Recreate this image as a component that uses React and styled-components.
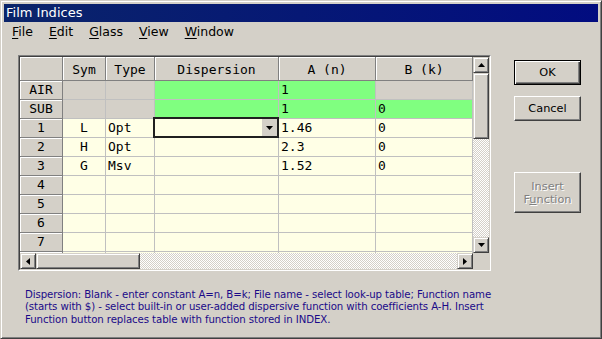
import React from 'react';
import styled, { createGlobalStyle } from 'styled-components';

const GlobalStyle = createGlobalStyle`
  html, body { margin: 0; padding: 0; background: #d4d0c8; }
  body { width: 602px; height: 339px; overflow: hidden; }
`;

const Window = styled.div`
  box-sizing: border-box;
  width: 602px;
  height: 339px;
  background: #d4d0c8;
  border: 1px solid;
  border-color: #d4d0c8 #404040 #404040 #d4d0c8;
  box-shadow: inset 1px 1px #fff, inset -1px -1px #808080;
  padding: 3px;
  display: flex;
  flex-direction: column;
  font-family: "DejaVu Sans", sans-serif;
`;

const TitleBar = styled.div`
  height: 18px;
  line-height: 18px;
  padding-left: 2px;
  color: #fff;
  font-size: 13px;
  background: linear-gradient(90deg, #0a246a, #020c80);
  white-space: nowrap;
`;

const MenuBar = styled.div`
  display: flex;
  height: 19px;
  align-items: center;
`;

const MenuItem = styled.div`
  padding: 0 8px;
  font-size: 12.5px;
  line-height: 19px;
  color: #000;
  u { text-decoration-thickness: 1px; text-underline-offset: 2px; }
`;

const Body = styled.div`
  display: flex;
  flex-direction: column;
  padding: 14px 0 0 14px;
`;

const MainRow = styled.div`
  display: flex;
  align-items: flex-start;
`;

const SunkenOuter = styled.div`
  box-sizing: border-box;
  width: 473px;
  height: 216px;
  border: 1px solid;
  border-color: #808080 #fff #fff #808080;
`;

const SunkenInner = styled.div`
  box-sizing: border-box;
  width: 100%;
  height: 100%;
  border: 1px solid;
  border-color: #404040 #d4d0c8 #d4d0c8 #404040;
  display: grid;
  grid-template-columns: 453px 16px;
  grid-template-rows: 196px 16px;
`;

const Viewport = styled.div`
  overflow: hidden;
  background: #d4d0c8;
`;

const Grid = styled.div`
  display: grid;
  grid-template-columns: 43px 43px 49px 124px 97px 97px;
  grid-template-rows: 24px repeat(10, 19px);
`;

const bgFor = (k) =>
  k === 'green' ? '#80ff80' : k === 'gray' || k === 'head' ? '#d4d0c8' : '#ffffe6';

const Cell = styled.div`
  position: relative;
  box-sizing: border-box;
  background: ${(p) => bgFor(p.$kind)};
  border-right: 1px solid ${(p) => (p.$kind === 'head' ? '#808080' : '#c0c0c0')};
  border-bottom: 1px solid ${(p) => (p.$kind === 'head' ? '#808080' : '#c0c0c0')};
  box-shadow: ${(p) => (p.$kind === 'head' ? 'inset 1px 1px #fff' : 'none')};
  font-family: "DejaVu Sans Mono", monospace;
  font-size: 13px;
  line-height: 18px;
  color: #000;
  display: flex;
  align-items: center;
  justify-content: ${(p) => (p.$center ? 'center' : 'flex-start')};
  padding: ${(p) => (p.$top ? '2px 2px 0' : '0 2px')};
  white-space: nowrap;
`;

const Editor = styled.div`
  position: absolute;
  left: -2px;
  top: -2px;
  right: -1px;
  bottom: -1px;
  box-sizing: border-box;
  border: 2px solid #202020;
  background: #ffffe6;
  display: flex;
  justify-content: flex-end;
  z-index: 2;
`;

const DropButton = styled.div`
  width: 15px;
  height: 100%;
  background: #d4d0c8;
  display: flex;
  align-items: center;
  justify-content: center;
`;

const Arrow = ({ dir = 'down' }) => {
  const pts = {
    down: '0,0 7,0 3.5,4',
    up: '0,4 7,4 3.5,0',
    left: '4,0 4,7 0,3.5',
    right: '0,0 0,7 4,3.5',
  }[dir];
  const horiz = dir === 'left' || dir === 'right';
  return (
    <svg width={horiz ? 4 : 7} height={horiz ? 7 : 4} viewBox={horiz ? '0 0 4 7' : '0 0 7 4'}>
      <polygon points={pts} fill="#000" />
    </svg>
  );
};

const ScrollV = styled.div`
  display: flex;
  flex-direction: column;
`;

const ScrollH = styled.div`
  display: flex;
  flex-direction: row;
`;

const Corner = styled.div`
  background: #d4d0c8;
`;

const Raised = styled.div`
  box-sizing: border-box;
  background: #d4d0c8;
  border: 1px solid;
  border-color: #d4d0c8 #404040 #404040 #d4d0c8;
  box-shadow: inset 1px 1px #fff, inset -1px -1px #808080;
  display: flex;
  align-items: center;
  justify-content: center;
  flex: none;
  width: ${(p) => p.$w}px;
  height: ${(p) => p.$h}px;
`;

const Track = styled.div`
  flex: 1;
  background: repeating-conic-gradient(#d4d0c8 0 25%, #fff 0 50%) 0 0 / 2px 2px;
`;

const ButtonColumn = styled.div`
  display: flex;
  flex-direction: column;
  margin-left: 23px;
  padding-top: 5px;
`;

const PushButton = styled.div`
  box-sizing: border-box;
  width: 67px;
  height: ${(p) => p.$h || 25}px;
  margin-top: ${(p) => p.$mt || 0}px;
  background: #d4d0c8;
  border: 1px solid;
  border-color: ${(p) => (p.$default ? '#000' : '#fff #404040 #404040 #fff')};
  box-shadow: ${(p) =>
    p.$default
      ? 'inset 1px 1px #fff, inset -1px -1px #404040, inset -2px -2px #808080'
      : 'inset -1px -1px #808080'};
  display: flex;
  align-items: center;
  justify-content: center;
  font-size: 11.3px;
  line-height: 13px;
  color: ${(p) => (p.$disabled ? '#808080' : '#000')};
  text-shadow: ${(p) => (p.$disabled ? '1px 1px #fff' : 'none')};
`;

const Label = styled.span`
  display: block;
  text-align: center;
  u { text-decoration-thickness: 1px; }
`;

const HelpText = styled.div`
  margin-top: 18px;
  padding-left: 7px;
  color: #1a0a88;
  font-size: 10.2px;
  line-height: 12.4px;
  letter-spacing: -0.1px;
  white-space: nowrap;
`;

const cols = ['', 'Sym', 'Type', 'Dispersion', 'A (n)', 'B (k)'];

const rows = [
  { h: 'AIR', c: [{ k: 'gray' }, { k: 'gray' }, { k: 'green' }, { k: 'green', t: '1' }, { k: 'gray' }] },
  { h: 'SUB', c: [{ k: 'gray' }, { k: 'gray' }, { k: 'green' }, { k: 'green', t: '1' }, { k: 'green', t: '0' }] },
  { h: '1', c: [{ t: 'L', center: true }, { t: 'Opt' }, { editor: true }, { t: '1.46' }, { t: '0' }] },
  { h: '2', c: [{ t: 'H', center: true }, { t: 'Opt' }, {}, { t: '2.3' }, { t: '0' }] },
  { h: '3', c: [{ t: 'G', center: true }, { t: 'Msv' }, {}, { t: '1.52' }, { t: '0' }] },
  { h: '4', c: [{}, {}, {}, {}, {}] },
  { h: '5', c: [{}, {}, {}, {}, {}] },
  { h: '6', c: [{}, {}, {}, {}, {}] },
  { h: '7', c: [{}, {}, {}, {}, {}] },
  { h: '', c: [{}, {}, {}, {}, {}] },
];

export default function App() {
  return (
    <>
      <GlobalStyle />
      <Window>
        <TitleBar>Film Indices</TitleBar>
        <MenuBar>
          <MenuItem><u>F</u>ile</MenuItem>
          <MenuItem><u>E</u>dit</MenuItem>
          <MenuItem><u>G</u>lass</MenuItem>
          <MenuItem><u>V</u>iew</MenuItem>
          <MenuItem><u>W</u>indow</MenuItem>
        </MenuBar>
        <Body>
          <MainRow>
            <SunkenOuter>
              <SunkenInner>
                <Viewport>
                  <Grid>
                    {cols.map((c, i) => (
                      <Cell key={'h' + i} $kind="head" $center $top>{c}</Cell>
                    ))}
                    {rows.map((r, i) => (
                      <React.Fragment key={'r' + i}>
                        <Cell $kind="head" $center>{r.h}</Cell>
                        {r.c.map((c, j) => (
                          <Cell key={j} $kind={c.k || 'data'} $center={c.center}>
                            {c.t}
                            {c.editor && (
                              <Editor>
                                <DropButton><Arrow dir="down" /></DropButton>
                              </Editor>
                            )}
                          </Cell>
                        ))}
                      </React.Fragment>
                    ))}
                  </Grid>
                </Viewport>
                <ScrollV>
                  <Raised $w={16} $h={16}><Arrow dir="up" /></Raised>
                  <Raised $w={16} $h={66} />
                  <Track />
                  <Raised $w={16} $h={16}><Arrow dir="down" /></Raised>
                </ScrollV>
                <ScrollH>
                  <Raised $w={16} $h={16}><Arrow dir="left" /></Raised>
                  <Raised $w={104} $h={16} />
                  <Track />
                  <Raised $w={16} $h={16}><Arrow dir="right" /></Raised>
                </ScrollH>
                <Corner />
              </SunkenInner>
            </SunkenOuter>
            <ButtonColumn>
              <PushButton $default><Label>OK</Label></PushButton>
              <PushButton $mt={11}><Label>Cancel</Label></PushButton>
              <PushButton $mt={51} $h={41} $disabled>
                <Label>Insert<br />F<u>u</u>nction</Label>
              </PushButton>
            </ButtonColumn>
          </MainRow>
          <HelpText>
            Dispersion: Blank - enter constant A=n, B=k; File name - select look-up table; Function name<br />
            (starts with $) - select built-in or user-added dispersive function with coefficients A-H. Insert<br />
            Function button replaces table with function stored in INDEX.
          </HelpText>
        </Body>
      </Window>
    </>
  );
}
